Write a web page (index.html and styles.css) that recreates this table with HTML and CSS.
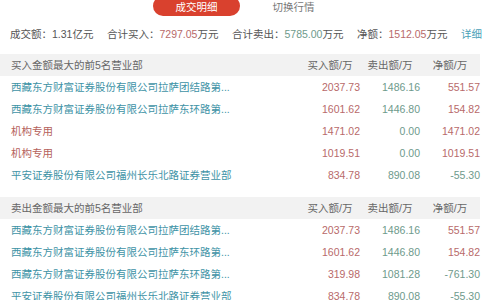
FILE: index.html
```html
<!DOCTYPE html>
<html lang="zh-CN">
<head>
    <meta charset="UTF-8">
    <title>成交明细</title>
    <link rel="stylesheet" href="styles.css">
</head>
<body>
    <div class="tabs">
        <span class="tab active">成交明细</span>
        <span class="tab">切换行情</span>
    </div>

    <div class="summary">
        <span>成交额：<b>1.31</b>亿元</span>
        <span>合计买入：<b class="up">7297.05</b>万元</span>
        <span>合计卖出：<b class="down">5785.00</b>万元</span>
        <span>净额：<b class="up">1512.05</b>万元</span>
        <a class="more">详细</a>
    </div>

    <div class="section">
        <div class="row head">
            <div class="name">买入金额最大的前5名营业部</div>
            <div class="col">买入额/万</div>
            <div class="col">卖出额/万</div>
            <div class="col">净额/万</div>
        </div>
        <div class="row">
            <div class="name dept">西藏东方财富证券股份有限公司拉萨团结路第...</div>
            <div class="num up">2037.73</div>
            <div class="num down">1486.16</div>
            <div class="num up">551.57</div>
        </div>
        <div class="row">
            <div class="name dept">西藏东方财富证券股份有限公司拉萨东环路第...</div>
            <div class="num up">1601.62</div>
            <div class="num down">1446.80</div>
            <div class="num up">154.82</div>
        </div>
        <div class="row">
            <div class="name inst">机构专用</div>
            <div class="num up">1471.02</div>
            <div class="num down">0.00</div>
            <div class="num up">1471.02</div>
        </div>
        <div class="row">
            <div class="name inst">机构专用</div>
            <div class="num up">1019.51</div>
            <div class="num down">0.00</div>
            <div class="num up">1019.51</div>
        </div>
        <div class="row">
            <div class="name dept">平安证券股份有限公司福州长乐北路证券营业部</div>
            <div class="num up">834.78</div>
            <div class="num down">890.08</div>
            <div class="num down">-55.30</div>
        </div>
    </div>

    <div class="section">
        <div class="row head">
            <div class="name">卖出金额最大的前5名营业部</div>
            <div class="col">买入额/万</div>
            <div class="col">卖出额/万</div>
            <div class="col">净额/万</div>
        </div>
        <div class="row">
            <div class="name dept">西藏东方财富证券股份有限公司拉萨团结路第...</div>
            <div class="num up">2037.73</div>
            <div class="num down">1486.16</div>
            <div class="num up">551.57</div>
        </div>
        <div class="row">
            <div class="name dept">西藏东方财富证券股份有限公司拉萨东环路第...</div>
            <div class="num up">1601.62</div>
            <div class="num down">1446.80</div>
            <div class="num up">154.82</div>
        </div>
        <div class="row">
            <div class="name dept">西藏东方财富证券股份有限公司拉萨东环路第...</div>
            <div class="num up">319.98</div>
            <div class="num down">1081.28</div>
            <div class="num down">-761.30</div>
        </div>
        <div class="row">
            <div class="name dept">平安证券股份有限公司福州长乐北路证券营业部</div>
            <div class="num up">834.78</div>
            <div class="num down">890.08</div>
            <div class="num down">-55.30</div>
        </div>
    </div>
</body>
</html>
```

FILE: styles.css
```css
body
{
    margin: 0;
    background: #fff;
    font-family: "Liberation Sans", "Noto Sans CJK SC", sans-serif;
    font-size: 10.5px;
    color: #555;
    overflow: hidden;
}
.tabs
{
    display: flex;
    gap: 10px;
    padding-left: 153px;
    margin-top: -4px;
}
.tab
{
    width: 87px;
    height: 20px;
    line-height: 22px;
    text-align: center;
    color: #777;
    border-radius: 10px;
}
.tab.active
{
    background: #d9412e;
    color: #fff;
}
.summary
{
    display: flex;
    justify-content: space-between;
    padding: 0 18px 0 10px;
    margin-top: 7px;
    height: 22px;
    line-height: 22px;
    color: #555;
}
.summary b
{
    font-weight: normal;
}
.more
{
    color: #4a9fb8;
}
.up
{
    color: #b86a6a;
}
.down
{
    color: #6e9a8c;
}
.section
{
    width: 480px;
    margin-top: 9px;
}
.section + .section
{
    margin-top: 11px;
}
.row
{
    display: flex;
    height: 22px;
    line-height: 22px;
}
.row.head
{
    background: #f2f2f2;
    color: #666;
}
.name
{
    flex: 1;
    padding-left: 11px;
    white-space: nowrap;
    overflow: hidden;
}
.dept
{
    color: #3e93a6;
}
.inst
{
    color: #b5615b;
}
.col
{
    width: 60px;
    text-align: center;
}
.num
{
    width: 60px;
    text-align: right;
}
```
